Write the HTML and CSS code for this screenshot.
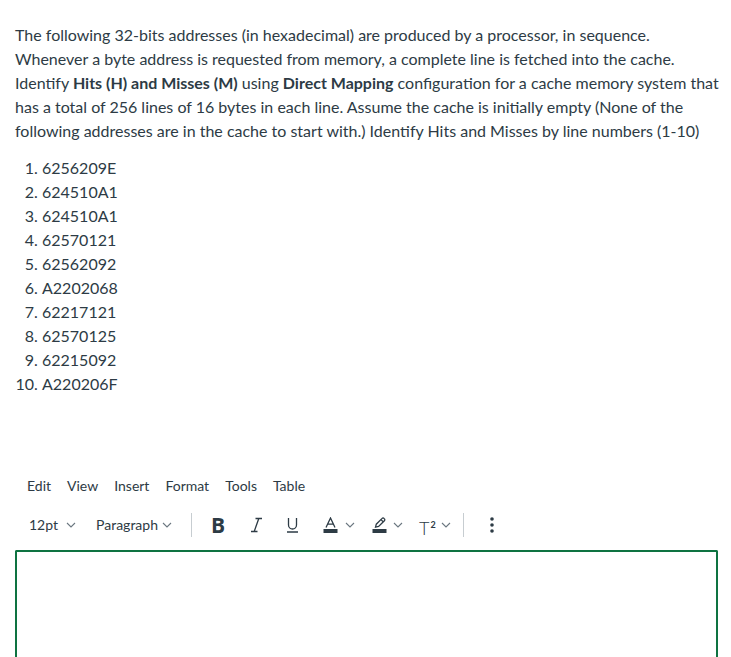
FILE: index.html
```html
<!DOCTYPE html>
<html>
<head>
<meta charset="utf-8">
<link rel="stylesheet" href="styles.css">
</head>
<body>
<div class="page">
  <p class="question">The following 32-bits addresses (in hexadecimal) are produced by a processor, in sequence.<br>Whenever a byte address is requested from memory, a complete line is fetched into the cache.<br>Identify <strong>Hits (H) and Misses (M)</strong> using <strong>Direct Mapping</strong> configuration for a cache memory system that<br>has a total of 256 lines of 16 bytes in each line. Assume the cache is initially empty (None of the<br>following addresses are in the cache to start with.) Identify Hits and Misses by line numbers (1-10)</p>
  <ol class="addresses">
    <li>6256209E</li>
    <li>624510A1</li>
    <li>624510A1</li>
    <li>62570121</li>
    <li>62562092</li>
    <li>A2202068</li>
    <li>62217121</li>
    <li>62570125</li>
    <li>62215092</li>
    <li>A220206F</li>
  </ol>
  <div class="editor">
    <div class="menubar">
      <span>Edit</span><span>View</span><span>Insert</span><span>Format</span><span>Tools</span><span>Table</span>
    </div>
    <div class="toolbar">
      <span class="label size">12pt</span>
      <svg class="chev c-size" viewBox="0 0 10 6"><path d="M1 1l4 4 4-4"/></svg>
      <span class="label para">Paragraph</span>
      <svg class="chev c-para" viewBox="0 0 10 6"><path d="M1 1l4 4 4-4"/></svg>
      <div class="sep sep1"></div>
      <span class="bold">B</span>
      <svg class="icon i-ital" viewBox="0 0 13 16"><path d="M5.5 1.5h6.5M1 14.5h6.5M8.8 1.5L4.2 14.5"/></svg>
      <svg class="icon i-under" viewBox="0 0 13 16"><path d="M2.5 1v7a4 4 0 0 0 8 0V1M1 15h11"/></svg>
      <svg class="icon i-color" viewBox="0 0 15 16"><path d="M3 10.5L7.5 1l4.5 9.5M4.6 7.2h5.8"/><rect x="0.5" y="12" width="14" height="4" class="fill"/></svg>
      <svg class="chev c-color" viewBox="0 0 10 6"><path d="M1 1l4 4 4-4"/></svg>
      <svg class="icon i-pen" viewBox="0 0 15 16"><path d="M3.5 10.2l0.8-3 5.8-5.8a1.3 1.3 0 0 1 1.9 0l0.4 0.4a1.3 1.3 0 0 1 0 1.9l-5.8 5.8z M9 2.6l2.6 2.6"/><rect x="0.5" y="12" width="14" height="4" class="fill"/></svg>
      <svg class="chev c-pen" viewBox="0 0 10 6"><path d="M1 1l4 4 4-4"/></svg>
      <span class="sup">T<sup>2</sup></span>
      <svg class="chev c-sup" viewBox="0 0 10 6"><path d="M1 1l4 4 4-4"/></svg>
      <div class="sep sep2"></div>
      <svg class="more" viewBox="0 0 4 16"><circle cx="2" cy="2" r="1.8"/><circle cx="2" cy="8" r="1.8"/><circle cx="2" cy="14" r="1.8"/></svg>
    </div>
    <div class="area"></div>
  </div>
</div>
</body>
</html>
```

FILE: styles.css
```css
html, body {
  margin: 0;
  padding: 0;
  background: #fff;
}
body {
  font-family: Lato, "Open Sans", sans-serif;
  color: #2d3b45;
}
.page {
  padding: 23px 0 0 15px;
}
.question {
  margin: 0;
  font-size: 16px;
  line-height: 24px;
  width: 716px;
  white-space: nowrap;
}
.question strong {
  font-weight: 700;
}
.addresses {
  margin: 13px 0 0 0;
  padding-left: 27px;
  font-size: 16px;
  line-height: 24px;
}
.editor {
  margin-top: 80px;
}
.menubar {
  display: flex;
  padding-left: 4px;
  font-size: 14px;
  line-height: 20px;
}
.menubar span {
  padding: 0 8px;
}
.toolbar {
  display: flex;
  align-items: center;
  margin-top: 17px;
  height: 24px;
  font-size: 14px;
  padding-left: 14px;
}
.label {
  line-height: 20px;
}
.para {
  margin-left: 20px;
}
.chev {
  width: 10px;
  height: 6px;
  fill: none;
  stroke: #6b7780;
  stroke-width: 1.1;
  flex: none;
}
.c-size { margin-left: 8px; }
.c-para { margin-left: 4px; }
.c-color { margin-left: 7px; }
.c-pen { margin-left: 6px; }
.c-sup { margin-left: 6px; }
.sep {
  width: 1px;
  height: 24px;
  background: #c7cdd1;
  flex: none;
}
.sep1 { margin-left: 19px; }
.sep2 { margin-left: 12px; }
.bold {
  font-family: "Open Sans", Lato, sans-serif;
  font-weight: 700;
  font-size: 21px;
  line-height: 24px;
  margin-left: 19px;
  width: 13px;
}
.icon {
  height: 16px;
  fill: none;
  stroke: #2d3b45;
  stroke-width: 1.3;
  flex: none;
}
.icon .fill {
  fill: #2d3b45;
  stroke: none;
}
.i-ital { width: 13px; margin-left: 26px; }
.i-under { width: 13px; margin-left: 23px; }
.i-color { width: 15px; margin-left: 24px; }
.i-pen { width: 15px; margin-left: 17px; }
.sup {
  margin-left: 16px;
  width: 16px;
  font-size: 18px;
  font-weight: 300;
  line-height: 24px;
  position: relative;
  top: 1px;
}
.sup sup {
  font-size: 9px;
  font-weight: 700;
  vertical-align: 7px;
  margin-left: 1px;
}
.more {
  width: 4px;
  height: 16px;
  margin-left: 26px;
  fill: #2d3b45;
  flex: none;
}
.area {
  margin-top: 13px;
  height: 105px;
  border: 2px solid #0e7341;
  border-bottom: none;
  border-radius: 2px 2px 0 0;
  width: 699px;
}
```
